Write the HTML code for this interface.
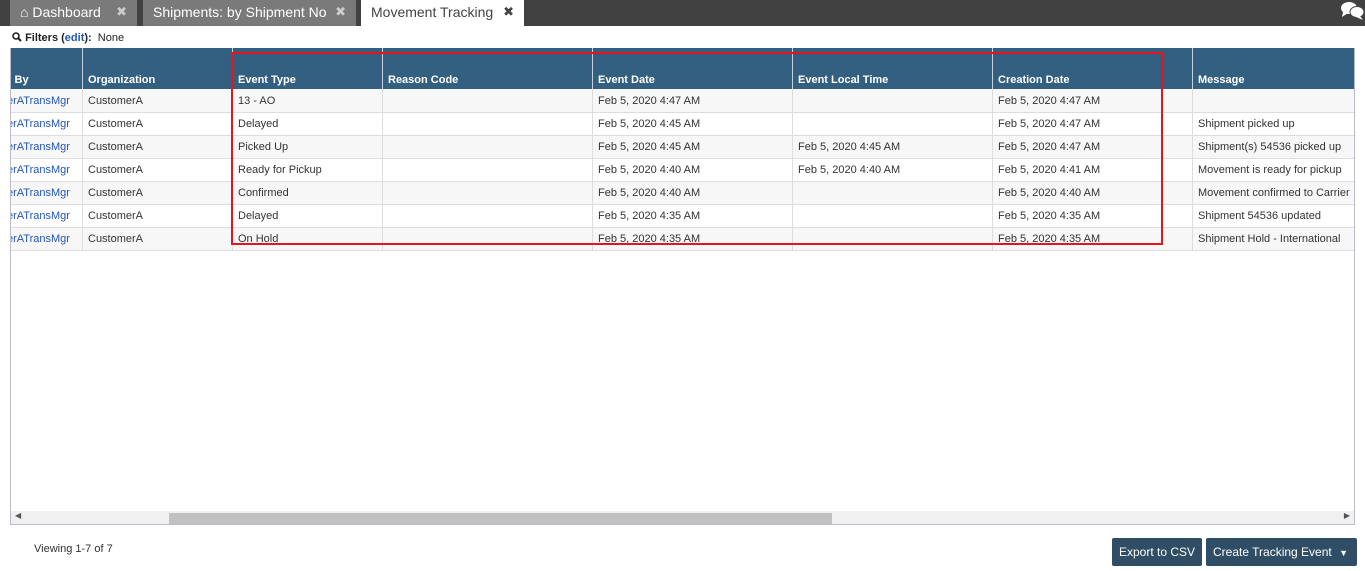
<!DOCTYPE html>
<html><head><style>
*{margin:0;padding:0;box-sizing:border-box}
body{width:1365px;height:571px;overflow:hidden;background:#fff;font-family:"Liberation Sans",sans-serif;font-size:11px;color:#333;position:relative}
.bar{position:absolute;left:0;top:0;width:1365px;height:26px;background:#414141}
.tab{position:absolute;top:0;height:26px;background:#7a7a7a;color:#fff;font-size:14px;line-height:24px;padding-left:10px;white-space:nowrap}
.tab .x{position:absolute;right:10px;top:0;color:#ccc;font-size:13px}
.tab.act{background:#fff;color:#444}
.tab.act .x{color:#444}
.filt{position:absolute;left:12px;top:32px;font-size:11px;color:#222}
.grid{position:absolute;left:10px;top:48px;width:1345px;height:477px;border:1px solid #b9bcc8;border-top:none;overflow:hidden}
table{border-collapse:collapse;position:absolute;left:-2px;top:0;table-layout:fixed;width:1363px}
th{background:#335f80;color:#fff;font-weight:bold;text-align:left;height:41px;vertical-align:bottom;padding:0 5px 3px;border-left:1px solid #c8d2dc;font-size:11px}
td{height:23px;padding:1px 5px 0;border-left:1px solid #ddd;border-bottom:1px solid #ddd;white-space:nowrap;overflow:hidden;vertical-align:middle;font-size:11px}
tr:nth-child(even) td{background:#f7f7f7}
td.l{color:#2255bb}
.sb{position:absolute;left:0;bottom:0;width:1343px;height:13px;background:#f0f0f0}
.thumb{position:absolute;left:158px;top:2px;width:663px;height:11px;background:#c1c1c1}
.red{position:absolute;left:231px;top:52px;width:932px;height:193px;border:2px solid #e8131b}
.btn{position:absolute;top:538px;height:28px;background:#2f4e66;color:#fff;font-size:12px;line-height:28px;padding:0 7px;border-radius:2px;white-space:nowrap}
</style></head><body>
<div class="bar"></div>
<div class="tab" style="left:10px;width:127px">&#8962; Dashboard<span class="x">✖</span></div>
<div class="tab" style="left:143px;width:213px">Shipments: by Shipment No<span class="x">✖</span></div>
<div class="tab act" style="left:361px;width:163px">Movement Tracking<span class="x">✖</span></div>
<svg style="position:absolute;left:1340px;top:1px" width="25" height="20" viewBox="0 0 25 20"><ellipse cx="9" cy="7" rx="8" ry="6" fill="#fff"/><path d="M3 11 L2 16 L8 12Z" fill="#fff"/><ellipse cx="17" cy="11" rx="7" ry="5.5" fill="#fff" stroke="#414141" stroke-width="1"/><path d="M20 15 L23 19 L16 16Z" fill="#fff"/></svg>
<div class="filt"><svg width="10" height="10" viewBox="0 0 10 10" style="vertical-align:-1px"><circle cx="4" cy="4" r="3" fill="none" stroke="#222" stroke-width="1.6"/><path d="M6 6L9 9" stroke="#222" stroke-width="2"/></svg> <b>Filters (<span style="color:#2255bb">edit</span>):</b> &nbsp;None</div>
<div class="grid">
<table>
<colgroup><col style="width:73px"><col style="width:150px"><col style="width:150px"><col style="width:210px"><col style="width:200px"><col style="width:200px"><col style="width:200px"><col style="width:180px"></colgroup>
<tr><th style="border-left:none">By</th><th>Organization</th><th>Event Type</th><th>Reason Code</th><th>Event Date</th><th>Event Local Time</th><th>Creation Date</th><th>Message</th></tr>
<tr><td class="l" style="text-indent:-8px">erATransMgr</td><td>CustomerA</td><td>13 - AO</td><td></td><td>Feb 5, 2020 4:47 AM</td><td></td><td>Feb 5, 2020 4:47 AM</td><td></td></tr>
<tr><td class="l" style="text-indent:-8px">erATransMgr</td><td>CustomerA</td><td>Delayed</td><td></td><td>Feb 5, 2020 4:45 AM</td><td></td><td>Feb 5, 2020 4:47 AM</td><td>Shipment picked up</td></tr>
<tr><td class="l" style="text-indent:-8px">erATransMgr</td><td>CustomerA</td><td>Picked Up</td><td></td><td>Feb 5, 2020 4:45 AM</td><td>Feb 5, 2020 4:45 AM</td><td>Feb 5, 2020 4:47 AM</td><td>Shipment(s) 54536 picked up</td></tr>
<tr><td class="l" style="text-indent:-8px">erATransMgr</td><td>CustomerA</td><td>Ready for Pickup</td><td></td><td>Feb 5, 2020 4:40 AM</td><td>Feb 5, 2020 4:40 AM</td><td>Feb 5, 2020 4:41 AM</td><td>Movement is ready for pickup</td></tr>
<tr><td class="l" style="text-indent:-8px">erATransMgr</td><td>CustomerA</td><td>Confirmed</td><td></td><td>Feb 5, 2020 4:40 AM</td><td></td><td>Feb 5, 2020 4:40 AM</td><td>Movement confirmed to Carrier</td></tr>
<tr><td class="l" style="text-indent:-8px">erATransMgr</td><td>CustomerA</td><td>Delayed</td><td></td><td>Feb 5, 2020 4:35 AM</td><td></td><td>Feb 5, 2020 4:35 AM</td><td>Shipment 54536 updated</td></tr>
<tr><td class="l" style="text-indent:-8px">erATransMgr</td><td>CustomerA</td><td>On Hold</td><td></td><td>Feb 5, 2020 4:35 AM</td><td></td><td>Feb 5, 2020 4:35 AM</td><td>Shipment Hold - International</td></tr>
</table>
<div class="sb"><div class="thumb"></div><span style="position:absolute;left:4px;top:0;font-size:8px;color:#555">◀</span><span style="position:absolute;right:4px;top:0;font-size:8px;color:#555">▶</span></div>
</div>
<div class="red"></div>
<div style="position:absolute;left:34px;top:543px;font-size:11px;color:#333">Viewing 1-7 of 7</div>
<div class="btn" style="left:1112px;width:90px">Export to CSV</div>
<div class="btn" style="left:1206px;width:151px">Create Tracking Event <span style="font-size:9px;margin-left:4px">▼</span></div>
</body></html>
